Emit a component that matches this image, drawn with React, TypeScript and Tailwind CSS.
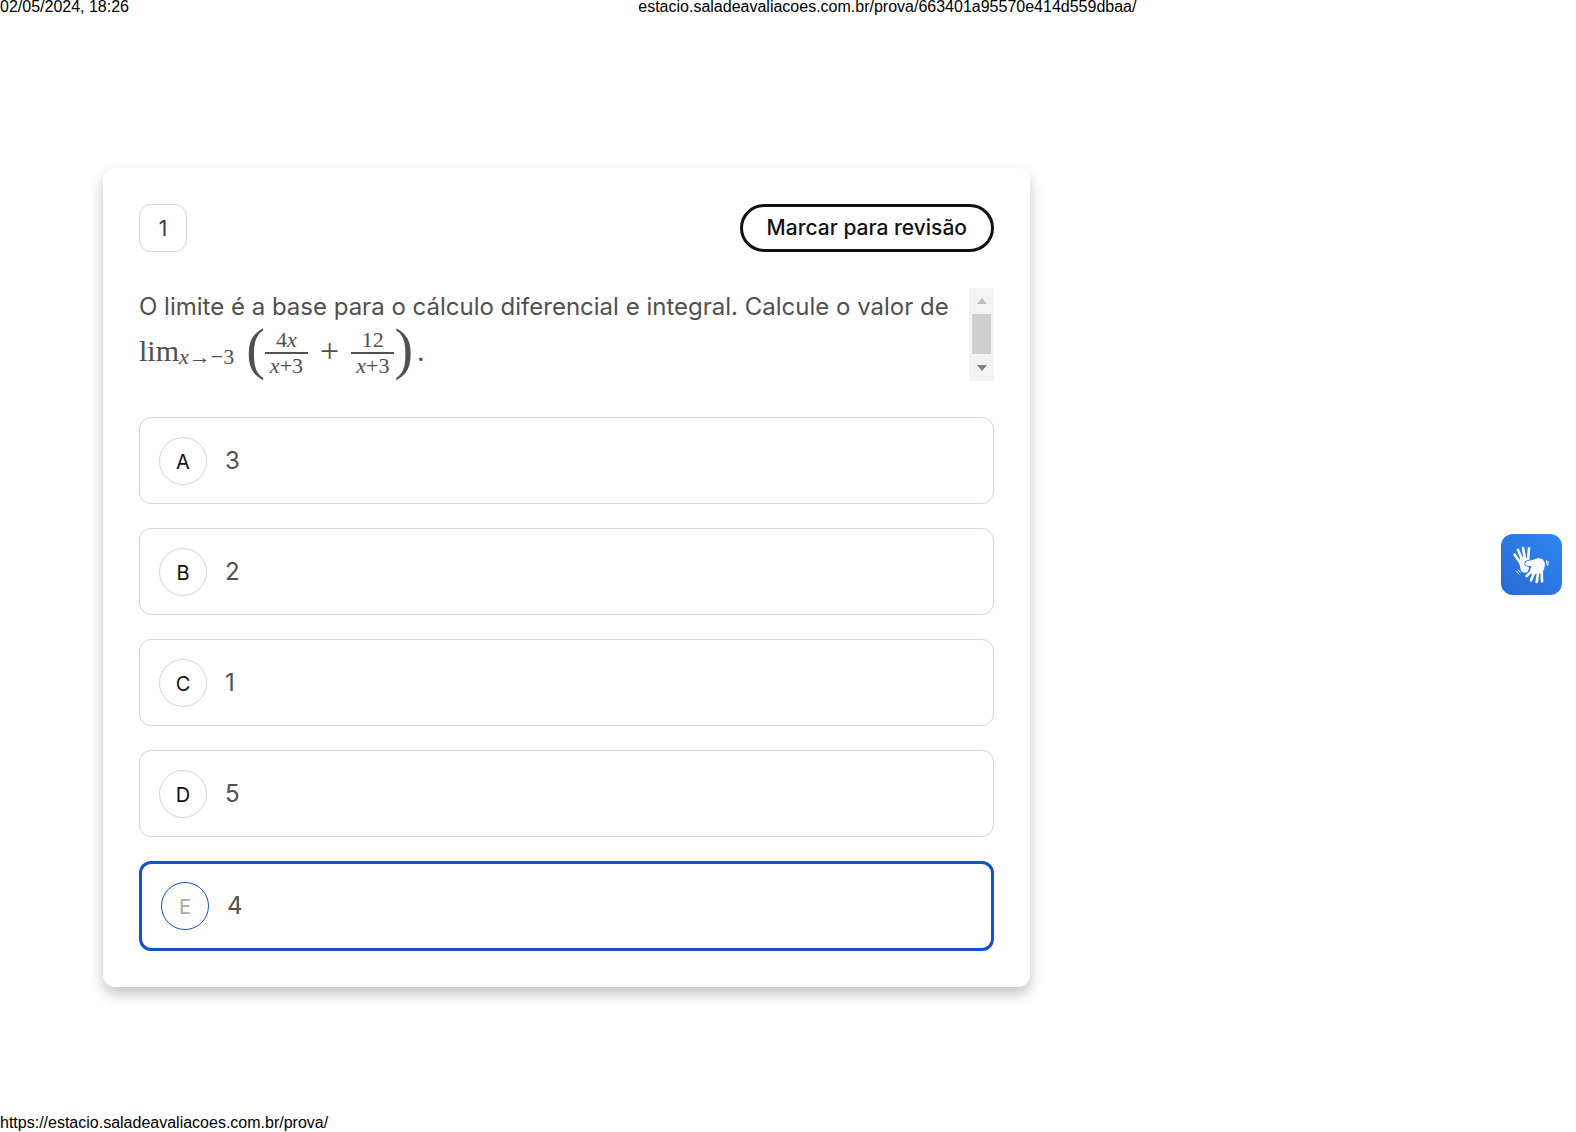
import { useState } from "react";

const answers = [
    { letter: "A", value: "3" },
    { letter: "B", value: "2" },
    { letter: "C", value: "1" },
    { letter: "D", value: "5" },
    { letter: "E", value: "4" },
];

function Fraction({ top, bottom }: { top: React.ReactNode; bottom: React.ReactNode }) {
    return (
        <span className="flex flex-col items-center text-[22px] leading-6">
            <span>{top}</span>
            <span className="border-t-2 border-[#505050] px-[5px]">{bottom}</span>
        </span>
    );
}

function Formula() {
    return (
        <span className="flex h-[56px] items-center font-['Liberation_Serif',serif] text-[30px] leading-8">
            <span className="pb-1">lim</span>
            <span className="pt-2 text-[22px] leading-6">
                <i>x</i>→−3
            </span>
            <span className="pb-2 pl-3 text-[56px] leading-[56px]">(</span>
            <Fraction
                top={
                    <>
                        4<i>x</i>
                    </>
                }
                bottom={
                    <>
                        <i>x</i>+3
                    </>
                }
            />
            <span className="px-3 pb-1 text-[34px]">+</span>
            <Fraction
                top="12"
                bottom={
                    <>
                        <i>x</i>+3
                    </>
                }
            />
            <span className="pb-2 text-[56px] leading-[56px]">)</span>
            <span className="pb-1 pl-1">.</span>
        </span>
    );
}

function ScrollBar() {
    return (
        <div className="flex w-[25px] shrink-0 flex-col items-center bg-[#f3f3f3]">
            <button aria-label="Rolar para cima" className="flex h-[26px] w-full items-center justify-center">
                <svg width="10" height="6" viewBox="0 0 10 6" fill="#bcbcbc">
                    <path d="M0 6 5 0l5 6z" />
                </svg>
            </button>
            <div className="h-10 w-[19px] bg-[#cfcfcf]" />
            <button aria-label="Rolar para baixo" className="flex w-full grow items-center justify-center">
                <svg width="10" height="6" viewBox="0 0 10 6" fill="#7f7f7f">
                    <path d="M0 0h10L5 6z" />
                </svg>
            </button>
        </div>
    );
}

function HandsIcon() {
    return (
        <svg className="size-full" viewBox="0 0 183 183" fill="none" strokeLinecap="round" strokeLinejoin="round">
            <g stroke="#fff" strokeWidth="8">
                <path d="m41 62 17 25M51 48l14 32M66 42l6 34M84 43l-3 36" />
            </g>
            <path fill="#fff" d="M53 80 61 70l23 4 5 10-9 8 4 10-4 11c-6 5-15 3-20-3z" />
            <path
                fill="#fff"
                stroke="#2d78e2"
                strokeWidth="3"
                d="M73 84c8-8 16-5 24-8 8-4 14-6 22-4 8 2 13 9 14 17 1 10-4 20-8 29l-34 4-5-16 4-8-13-2c-6-1-8-7-4-12z"
            />
            <g stroke="#fff" strokeWidth="8">
                <path d="M94 109 77 126M102 111l-12 28M112 112l-5 32M122 108l1 34" />
            </g>
            <g stroke="#fff" strokeWidth="3">
                <path d="m47 112 7 8M52 108l6 7M136 80l3 14M141 82v10" />
            </g>
        </svg>
    );
}

export default function App() {
    const [selected, setSelected] = useState("E");

    return (
        <div className="flex min-h-screen flex-col bg-white font-['Inter',sans-serif] text-[#505050]">
            <header className="flex h-[168px] font-['Liberation_Sans',sans-serif] text-base leading-[14px] text-black">
                <span className="w-[40.5%]">02/05/2024, 18:26</span>
                <span>estacio.saladeavaliacoes.com.br/prova/663401a95570e414d559dbaa/</span>
            </header>

            <main className="grow pl-[103px]">
                <section className="max-w-[927px] rounded-xl bg-white p-9 shadow-[0_7px_14px_rgba(0,0,0,0.24)]">
                    <div className="flex items-center justify-between">
                        <span className="flex size-12 items-center justify-center rounded-xl border border-[#d6d6d6] pt-[2px] text-[21px] text-[#3a3a3a]">
                            1
                        </span>
                        <button className="h-12 rounded-full border-3 border-[#111] px-6 text-[21px] font-medium text-[#111]">
                            Marcar para revisão
                        </button>
                    </div>

                    <div className="mt-9 flex h-[93px] justify-between">
                        <div className="text-2xl">
                            <p className="pt-px leading-9">
                                O limite é a base para o cálculo diferencial e integral. Calcule o valor de
                            </p>
                            <Formula />
                        </div>
                        <ScrollBar />
                    </div>

                    <div role="radiogroup" aria-label="Alternativas" className="mt-9 flex flex-col gap-6">
                        {answers.map((a) => (
                            <label
                                key={a.letter}
                                className={`flex cursor-pointer items-center gap-[18px] rounded-xl px-[19px] ${
                                    a.letter == selected
                                        ? "h-[90px] border-3 border-[#1450cf]"
                                        : "h-[87px] border border-[#d6d6d6]"
                                }`}
                            >
                                <span className="grid size-12 place-items-center">
                                    <input
                                        type="radio"
                                        name="answer"
                                        value={a.value}
                                        checked={a.letter == selected}
                                        onChange={() => setSelected(a.letter)}
                                        className="col-start-1 row-start-1 size-12 appearance-none rounded-full border border-[#d6d6d6] checked:border-[#1450cf]"
                                    />
                                    <span
                                        className={`col-start-1 row-start-1 pt-[2px] text-[20px] ${
                                            a.letter == selected ? "text-[#aaa]" : "text-[#111]"
                                        }`}
                                    >
                                        {a.letter}
                                    </span>
                                </span>
                                <span className="text-2xl">{a.value}</span>
                            </label>
                        ))}
                    </div>
                </section>
            </main>

            <footer className="font-['Liberation_Sans',sans-serif] text-base leading-[18px] text-black">
                https://estacio.saladeavaliacoes.com.br/prova/
            </footer>

            <button
                aria-label="Traduzir para Libras"
                className="fixed top-[534px] right-[14px] size-[61px] rounded-xl bg-linear-to-bl from-[#3088f2] to-[#2768d3]"
            >
                <HandsIcon />
            </button>
        </div>
    );
}
